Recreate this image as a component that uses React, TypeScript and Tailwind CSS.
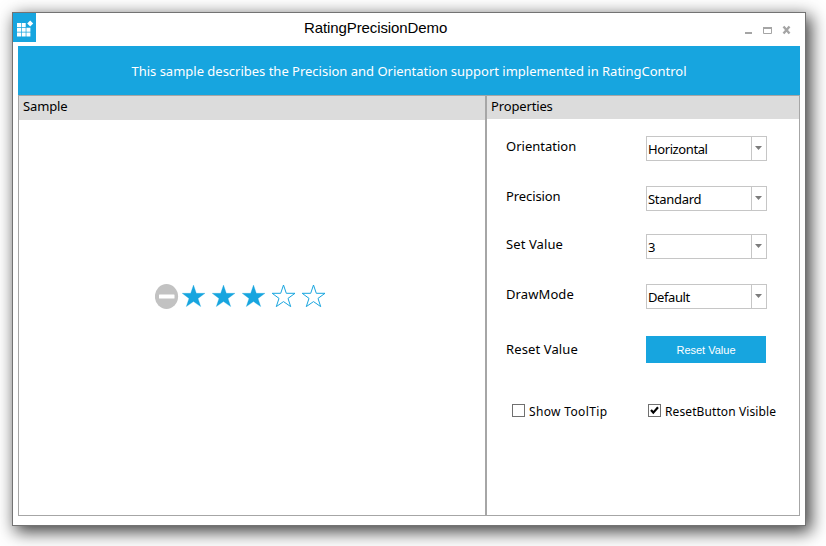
import React, { useState } from "react";

const STAR = "M11.5 1 L14.3 9.3 H23 L16 14.4 L18.7 22.6 L11.5 17.6 L4.3 22.6 L7 14.4 L0.2 9.3 H8.7 Z";

function Star({ filled }: { filled: boolean }) {
  return (
    <svg width="24" height="24" viewBox="0 0 24 24" className="block">
      <path d={STAR} fill={filled ? "#17a5df" : "none"} stroke="#17a5df" strokeWidth={filled ? 0.3 : 1} />
    </svg>
  );
}

function Combo({ value, tracking }: { value: string; tracking: string }) {
  return (
    <div className="flex h-[25px] w-[121px] border border-[#c6c6c6] bg-white">
      <div className={`h-full w-[105px] border-r border-[#c6c6c6] pl-px pt-[3px] text-[13px] leading-[18px] ${tracking}`}>
        {value}
      </div>
      <div className="flex flex-1 pl-[3px] pt-[9px]">
        <svg width="7" height="4" viewBox="0 0 7 4" className="block">
          <path d="M0 0H7L3.5 4Z" fill="#7c7c7c" />
        </svg>
      </div>
    </div>
  );
}

function Row({ label, tracking, className, children }: { label: string; tracking: string; className: string; children: React.ReactNode }) {
  return (
    <div className={`flex items-start pl-[19px] ${className}`}>
      <div className={`w-[140px] whitespace-nowrap text-[13px] leading-[18px] ${tracking}`}>{label}</div>
      {children}
    </div>
  );
}

function Check({ label, checked, onToggle, className, tracking }: { label: string; checked: boolean; onToggle: () => void; className: string; tracking: string }) {
  return (
    <button type="button" onClick={onToggle} className={`flex items-start ${className}`}>
      <span className="block h-[13px] w-[13px] border border-[#707070] bg-white">
        {checked && (
          <svg width="11" height="11" viewBox="0 0 11 11" className="block">
            <path d="M2 5L4.3 7.6L9 2.2" fill="none" stroke="#000" strokeWidth="2.2" />
          </svg>
        )}
      </span>
      <span className={`-mt-px ml-1 whitespace-nowrap text-[12px] leading-[18px] ${tracking}`}>{label}</span>
    </button>
  );
}

export default function App() {
  const [rating, setRating] = useState(3);
  const [tip, setTip] = useState(false);
  const [reset, setReset] = useState(true);
  return (
    <div className="h-[546px] w-[826px] overflow-hidden bg-white p-3 font-['Noto_Sans','Open_Sans',sans-serif] text-black">
      <div className="flex h-[514px] w-[794px] flex-col border border-[#737373] bg-white shadow-[4px_5px_16px_1px_rgba(0,0,0,0.75)]">
        <div className="flex h-[33px] items-start">
          <div className="h-[29px] w-[23px] bg-[#17a5df]">
            <svg width="23" height="29" viewBox="0 0 23 29" className="block" fill="#fff">
              <path d="M4 10h4v4H4zM8.7 10h4v4h-4zM4 14.7h4v4H4zM8.7 14.7h4v4h-4zM13.4 14.7h4v4h-4zM4 19.4h4v4H4zM8.7 19.4h4v4h-4zM13.4 19.4h4v4h-4z" />
              <path d="M17.2 7.6L20.2 10.6L17.2 13.6L14.2 10.6Z" />
            </svg>
          </div>
          <div className="flex-1 pl-[268px] pt-[5px] font-['Liberation_Sans',sans-serif] text-[15px] leading-5 tracking-[-0.1px]">
            RatingPrecisionDemo
          </div>
          <svg width="46" height="10" viewBox="0 0 46 10" className="mr-[14px] mt-[12px] block" fill="none" stroke="#a5a5a5">
            <path d="M0 8H7" strokeWidth="2" />
            <path d="M18 3H27" strokeWidth="2" />
            <path d="M18.5 3V8.5H26.5V3" />
            <path d="M38.5 1.5L44.5 8.5M44.5 1.5L38.5 8.5" strokeWidth="2.4" />
          </svg>
        </div>
        <div className="mx-[5px] flex h-[49px] items-center justify-center bg-[#17a5df] pt-[2px] text-[13px] tracking-[-0.01px] text-white">
          <span className="whitespace-nowrap">This sample describes the Precision and Orientation support implemented in RatingControl</span>
        </div>
        <div className="mx-[5px] flex h-[421px] border border-[#a6a6a6]">
          <div className="flex w-[467px] flex-col border-r border-[#a6a6a6]">
            <div className="h-6 bg-[#dcdcdc] pl-1 pt-px text-[13px] leading-[18px] tracking-[-0.15px]">Sample</div>
            <div className="flex pl-[136px] pt-[164px]">
              <button type="button" onClick={() => setRating(0)} className="mr-[3px] block">
                <svg width="24" height="26" viewBox="0 0 24 26" className="block">
                  <ellipse cx="11.5" cy="12.5" rx="11.6" ry="12.5" fill="#c2c2c2" />
                  <rect x="4" y="10.5" width="15.5" height="4" rx="0.5" fill="#fff" />
                </svg>
              </button>
              <div className="flex gap-1.5">
                {[1, 2, 3, 4, 5].map((n) => (
                  <button key={n} type="button" onClick={() => setRating(n)} className="block h-6">
                    <Star filled={n <= rating} />
                  </button>
                ))}
              </div>
            </div>
          </div>
          <div className="flex flex-1 flex-col border-l border-[#a6a6a6]">
            <div className="h-[23px] bg-[#dcdcdc] pl-1 pt-px text-[13px] leading-[18px] tracking-[-0.15px]">Properties</div>
            <div className="flex flex-col pt-[17px]">
              <Row label="Orientation" tracking="pt-px" className="h-[50px]"><Combo value="Horizontal" tracking="tracking-[-0.4px]" /></Row>
              <Row label="Precision" tracking="pt-px tracking-[-0.1px]" className="h-[48px]"><Combo value="Standard" tracking="tracking-[-0.3px]" /></Row>
              <Row label="Set Value" tracking="pt-px tracking-[0.1px]" className="h-[50px]"><Combo value="3" tracking="" /></Row>
              <Row label="DrawMode" tracking="pt-px tracking-[0.1px]" className="h-[52px]"><Combo value="Default" tracking="tracking-[-0.4px]" /></Row>
              <Row label="Reset Value" tracking="pt-1 tracking-[0.12px]" className="h-[68px]">
                <button type="button" onClick={() => setRating(0)} className="h-[27px] w-[120px] bg-[#17a5df] pt-px font-['Liberation_Sans',sans-serif] text-[11px] text-white">
                  Reset Value
                </button>
              </Row>
              <div className="flex pl-[25px]">
                <Check label="Show ToolTip" checked={tip} onToggle={() => setTip(!tip)} className="w-[136px]" tracking="tracking-[0.35px]" />
                <Check label="ResetButton Visible" checked={reset} onToggle={() => setReset(!reset)} className="" tracking="tracking-[0.1px]" />
              </div>
            </div>
          </div>
        </div>
      </div>
    </div>
  );
}
